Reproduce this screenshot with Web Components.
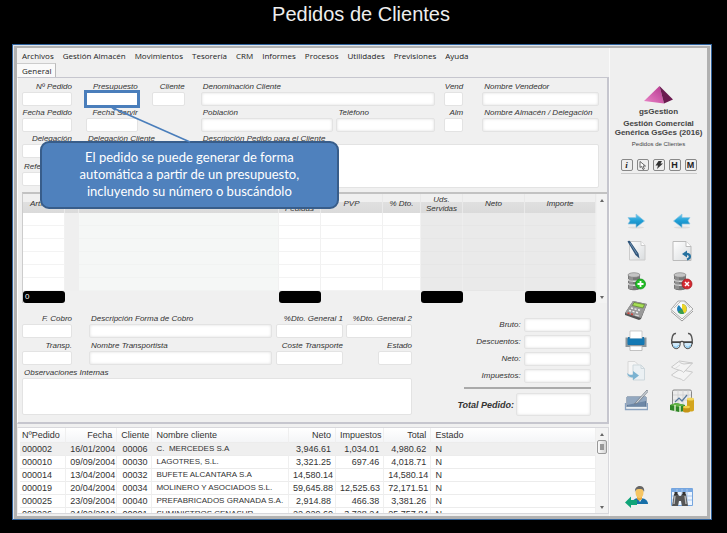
<!DOCTYPE html>
<html lang="es">
<head>
<meta charset="utf-8">
<title>Pedidos de Clientes</title>
<style>
  html { background: #000; }
  body { margin: 0; background: #000; font-family: "Liberation Sans", Arial, sans-serif; color: #333; }
</style>
</head>
<body>
<order-page></order-page>

<script>
const define = (name, html, setup) => {
  const template = document.createElement('template');
  template.innerHTML = html;
  customElements.define(name, class extends HTMLElement {
    constructor() {
      super();
      this.attachShadow({ mode: 'open' }).append(template.content.cloneNode(true));
    }
    connectedCallback() {
      if (setup && !this.ready) { this.ready = true; setup(this, this.shadowRoot); }
    }
  });
};

/* Labelled text box. Attributes: label, align=end, soft, area, inline, total, marked */
define('gs-field', `
<style>
  :host { display: flex; flex-direction: column; position: relative; min-width: 0; font-size: 8px; }
  label { height: 10px; line-height: 10px; font-style: italic; white-space: nowrap; padding-left: 2px; color: #333; }
  :host([align=end]) label { align-self: flex-end; padding: 0; }
  input, textarea { display: block; box-sizing: border-box; width: 100%; height: 14px; margin: 0; padding: 0 3px;
    border: 1px solid #e3e3e3; border-radius: 2px; background: #fff; font: 8px "Liberation Sans", Arial, sans-serif; resize: none; outline: none; }
  textarea { flex: 1; }
  :host([soft]) input { box-shadow: inset 0 0 3px #ddd; }
  :host([marked]) input { outline: 3px solid #4a7ebb; outline-offset: -1px; border-radius: 0; }
  :host([inline]) { flex-direction: row; align-items: center; justify-content: flex-end; gap: 3px; }
  :host([inline]) label { align-self: center; padding: 0; }
  :host([inline]) input { width: 53%; flex: none; }
  :host([total]) { gap: 2px; }
  :host([total]) label { font-weight: bold; font-size: 9px; }
  :host([total]) input { width: 59%; height: 23px; }
</style>
<label for="box"></label><slot></slot>`, (host, root) => {
  root.querySelector('label').textContent = host.getAttribute('label');
  const box = document.createElement(host.hasAttribute('area') ? 'textarea' : 'input');
  box.id = 'box';
  if (box.tagName === 'INPUT') box.type = 'text';
  root.querySelector('label').after(box);
});

define('gs-callout', `
<style>
  :host { position: absolute; z-index: 5; left: -46px; top: 59px; width: 299px; }
  p { margin: 0; padding: 6px 30px 7px; border: 2px solid #385d8a; border-radius: 9px; background: #4f81bd; color: #fff;
    font: 13px/17px Lato, Carlito, sans-serif; text-align: center; }
  svg { position: absolute; left: 70px; top: -35px; }
</style>
<svg width="84" height="38" aria-hidden="true"><path d="M3 2 80 36" stroke="#4a7ebb" stroke-width="1.6"/><path d="M0 1h7l-2 4z" fill="#4a7ebb"/></svg>
<p><slot></slot></p>`);

define('gs-menu', `
<style>
  :host { display: block; }
  nav { display: flex; gap: 9px; padding-left: 5px; height: 15px; align-items: center; }
  button { all: unset; font: 8px/14px "Open Sans", "Noto Sans", sans-serif; color: #222; white-space: nowrap; }
</style>
<nav></nav>`, (host, root) => {
  for (const name of ['Archivos', 'Gestión Almacén', 'Movimientos', 'Tesorería', 'CRM', 'Informes', 'Procesos', 'Utilidades', 'Previsiones', 'Ayuda']) {
    const b = document.createElement('button');
    b.textContent = name;
    root.querySelector('nav').append(b);
  }
});

define('gs-scroll', `
<style>
  :host { display: flex; flex-direction: column; width: 12px; background: #f3f3f3; box-sizing: border-box; }
  button { all: unset; height: 12px; display: grid; place-items: center; }
  i { display: block; border: 2px solid transparent; border-top: 0; border-bottom: 3px solid #666; }
  button:last-child i { transform: rotate(180deg); }
  div { flex: 1; }
  b { display: none; box-sizing: border-box; width: 10px; height: 14px; margin: 0 1px; border: 1px solid #999; border-radius: 2px;
    background: linear-gradient(#999,#999) center/4px 6px no-repeat, linear-gradient(90deg,#fafafa,#d5d5d5); }
  :host([thumb]) b { display: block; }
</style>
<button aria-label="Subir"><i></i></button><div><b></b></div><button aria-label="Bajar"><i></i></button>`);

define('gs-lines', `
<style>
  :host { display: flex; border-left: 1px solid #ccc; border-top: 2px solid #c2c2c2; }
  table { flex: 1; width: 0; table-layout: fixed; border-collapse: separate; border-spacing: 0; font-size: 8px; font-style: italic; }
  th { height: 19px; padding: 0; font-weight: normal; line-height: 9px; color: #333; border-right: 1px solid #e9e9e9; box-sizing: border-box;
    background: linear-gradient(#f0f0f0 40%, #e0e0e0 42%, #dadada); }
  td { height: 13px; padding: 0; box-sizing: border-box; background: #fff; border-right: 1px solid #f1f1f1; border-bottom: 1px solid #f3f3f3; }
  td.blank { background: #efefef; border-color: #efefef; }
  td.text { background: #f5f7f6; border-bottom-color: #f1f3f2; }
  td.calc { background: #eaeaea; border-color: #e6e6e6; border-right-color: #eee; }
  tfoot td { background: none; border: 0; height: 12px; }
  tfoot span { display: block; height: 12px; line-height: 12px; border-radius: 3px; background: #000; color: #fff; padding-left: 2px; font-style: normal; }
  gs-scroll { margin-left: 1px; width: 10px; }
</style>
<table>
  <colgroup></colgroup>
  <thead><tr></tr></thead><tbody></tbody><tfoot><tr></tr></tfoot>
</table>
<gs-scroll></gs-scroll>`, (host, root) => {
  const cols = [
    ['Artículo', 42, '', '0'], ['', 14, 'blank'], ['', 200, 'text'], ['Uds.<br>Pedidas', 42, '', ''], ['PVP', 62, ''],
    ['% Dto.', 38, ''], ['Uds.<br>Servidas', 42, 'calc', ''], ['Neto', 62, 'calc'], ['Importe', 71, 'calc', '']
  ];
  const total = cols.reduce((n, c) => n + c[1], 0);
  root.querySelector('colgroup').innerHTML = cols.map(c => `<col style="width:${c[1] * 100 / total}%">`).join('');
  root.querySelector('thead tr').innerHTML = cols.map(c => `<th>${c[0]}</th>`).join('');
  root.querySelector('tbody').innerHTML = ('<tr>' + cols.map(c => `<td class="${c[2]}"></td>`).join('') + '</tr>').repeat(6);
  root.querySelector('tfoot tr').innerHTML = cols.map(c => `<td>${c[3] === undefined ? '' : `<span>${c[3]}</span>`}</td>`).join('');
});

define('gs-orders', `
<style>
  :host { display: flex; height: 87px; overflow: hidden; background: #fff; border: 1px solid #d8d8dc; border-left-color: #eee; box-sizing: border-box; }
  div { flex: 1; overflow: hidden; padding-left: 2px; }
  table { width: 100%; table-layout: fixed; border-collapse: separate; border-spacing: 0; font-size: 9px; color: #333; }
  th, td { padding: 0 4px; height: 13px; line-height: 12px; box-sizing: border-box; text-align: left; font-weight: normal; white-space: nowrap;
    border-right: 1px solid #efefef; border-bottom: 1px solid #ececec; }
  th { height: 15px; background: linear-gradient(#fff, #f4f5f7); }
  th:first-child, td:first-child { padding-left: 2px; }
  td:nth-child(4) { font-size: 8px; }
  .n { text-align: right; }
  tbody tr:first-child td { background: #efefef; }
</style>
<div><table><colgroup></colgroup><thead><tr></tr></thead><tbody></tbody></table></div>
<gs-scroll thumb></gs-scroll>`, (host, root) => {
  const cols = [['NºPedido', 46], ['Fecha', 51, 1], ['Cliente', 35, 1], ['Nombre cliente', 136], ['Neto', 47, 1], ['Impuestos', 48, 1], ['Total', 47, 1], ['Estado', 164]];
  const rows = [
    ['000002', '16/01/2004', '00006', 'C.&nbsp; MERCEDES S.A', '3,946.61', '1,034.01', '4,980.62', 'N'],
    ['000010', '09/09/2004', '00030', 'LAGOTRES, S.L.', '3,321.25', '697.46', '4,018.71', 'N'],
    ['000014', '13/04/2004', '00032', 'BUFETE ALCANTARA S.A', '14,580.14', '', '14,580.14', 'N'],
    ['000019', '20/04/2004', '00034', 'MOLINERO Y ASOCIADOS S.L.', '59,645.88', '12,525.63', '72,171.51', 'N'],
    ['000025', '23/09/2004', '00040', 'PREFABRICADOS GRANADA S.A.', '2,914.88', '466.38', '3,381.26', 'N'],
    ['000026', '24/02/2010', '00001', 'SUMINISTROS CENASUR', '22,029.60', '3,728.24', '25,757.84', 'N']
  ];
  const total = cols.reduce((n, c) => n + c[1], 0);
  const cls = i => cols[i][2] ? ' class="n"' : '';
  root.querySelector('colgroup').innerHTML = cols.map(c => `<col style="width:${c[1] * 100 / total}%">`).join('');
  root.querySelector('thead tr').innerHTML = cols.map((c, i) => `<th${cls(i)}>${c[0]}</th>`).join('');
  root.querySelector('tbody').innerHTML = rows.map(r => '<tr>' + r.map((v, i) => `<td${cls(i)}>${v}</td>`).join('') + '</tr>').join('');
});

const disks = `<path d="M4 6v13c0 3 12 3 12 0V6z" fill="#777"/><path d="M4 10c0 3 12 3 12 0M4 14c0 3 12 3 12 0" fill="none" stroke="#ddd" stroke-width="1.3"/><path d="M6 6v14M8 7v13" stroke="#aaa"/><ellipse cx="10" cy="6" rx="6" ry="2.3" fill="#c4c4c4" stroke="#777" stroke-width=".6"/>`;
const icons = {
  siguiente: `<ellipse cx="12" cy="18.500" rx="8" ry="1" fill="#ddd"/><path d="M4 8.500h8V5l8.500 7-8.500 6.500V15H4l2-3.200z" fill="url(#blue)" stroke="#8fc6e2" stroke-width=".7"/>`,
  anterior: `<ellipse cx="12" cy="18.500" rx="8" ry="1" fill="#ddd"/><path d="M20 8.500h-8V5l-8.500 7 8.500 6.500V15h8l-2-3.200z" fill="url(#blue)" stroke="#8fc6e2" stroke-width=".7"/>`,
  modificar: `<path d="M5.500 2.500H17l4 4v14.500H5.500z" fill="url(#paper)" stroke="#ccc"/><path d="M17 2.500v4h4" fill="#fff" stroke="#ccc"/><path d="M3.500 2.500c1-1 2.500-1 3.500 1l7.500 11 1 5-4-3.500z" fill="#2f5479"/><path d="M6 4l7 11" stroke="#7d9fbd" stroke-width=".8"/>`,
  deshacer: `<path d="M3 2.500h13l5 5v14H3z" fill="url(#paper)" stroke="#bbb"/><path d="M16 2.500v5h5" fill="#fff" stroke="#bbb"/><path d="M17 20.500c4-1 4-6-1-5.500" fill="none" stroke="#25719f" stroke-width="2.200"/><path d="M12 15l5-3.500v7z" fill="#25719f"/>`,
  alta: disks + `<circle cx="16.500" cy="15" r="5" fill="#22bd26" stroke="#0c8c14" stroke-width=".7"/><path d="M16.500 12v6m-3-3h6" stroke="#fff" stroke-width="1.800"/>`,
  baja: disks + `<circle cx="17" cy="15" r="5" fill="#d52931" stroke="#9e1419" stroke-width=".7"/><path d="M15 13l4 4m0-4l-4 4" stroke="#fff" stroke-width="1.500"/>`,
  calcular: `<path d="M9 2l14 3-6 15-2 1L1 16v-2z" fill="#555"/><path d="M9 2l14 3-6 14L1 14z" fill="#9a9a9a"/><path d="M10 3.500l10.500 2-1.500 3.500L8.500 6.500z" fill="#a7df55" stroke="#517a20" stroke-width=".6"/><path d="M7 9l2 .5m1.500.4l2 .5m1.500.4l2 .5M5 11.500l2 .5m1.500.4l2 .5m1.500.4l2 .5" stroke="#eee" stroke-width="1.400"/><path d="M3.500 14l2 .5m1.500.4l2 .5" stroke="#d43f35" stroke-width="1.500"/><path d="M11 16l4 1" stroke="#ddd" stroke-width="1.200"/>`,
  informes: `<path d="M1 12.500L12 22l11-10" fill="#fff" stroke="#999"/><path d="M1 10.500L12 20l11-10-8-8H8z" fill="#f4f5f5" stroke="#aaa"/><path d="M4 9l7-7M14 2l6 7" stroke="#bbb"/><circle cx="12" cy="10" r="5" fill="#1d7fb8"/><path d="M12 10V5a5 5 0 0 1 2 9.500z" fill="#eed527"/><path d="M12 10l2 4.500a5 5 0 0 1-6-1.500z" fill="#3b9e49"/><path d="M8 5l4 5V4z" fill="#fff"/>`,
  imprimir: `<path d="M1.500 8.500h21v9.500h-21z" fill="#8b959b"/><path d="M4 8h16v8H4z" fill="#176fa5"/><path d="M6 2h12v8H6z" fill="#fff" stroke="#bbb" stroke-width=".7"/><path d="M3.500 9.500h17v6h-17z" fill="#1479b4"/><path d="M6 17h12v4.500H6z" fill="#fff" stroke="#aaa" stroke-width=".7"/>`,
  ver: `<path d="M2 15C1 9 3 4 6 4.500M22 15c1-6-1-11-4-10.500" fill="none" stroke="#555" stroke-width="1.400"/><path d="M2 13h8c1.500 8-7 9-8 2zM22 13h-8c-1.500 8 7 9 8 2z" fill="#cfe9fa" stroke="#444"/><path d="M1.500 13.200h8.500c1-1 3-1 4 0h8.500" fill="none" stroke="#444" stroke-width="1.500"/><path d="M3.500 17c2 2 4 1.500 5-1M15.500 17c2 2 4 1.500 5-1" fill="none" stroke="#68b8e8"/>`,
  copiar: `<g opacity=".65"><path d="M4 2.500h7l3 3V18H4z" fill="#f9f9f9" stroke="#ccc"/><path d="M9 6h8l3.500 3.500V21H9z" fill="#eaf2f6" stroke="#bccbd2"/><path d="M17 6v3.500h3.500" fill="none" stroke="#bccbd2"/><path d="M3 14c2 2 4 2 6 1.500V12l6 4.500L9 21v-2.500c-3 0-5-1-6-4.500z" fill="#3e93c2"/></g>`,
  apilar: `<g fill="#f4f4f4" stroke="#c4c4c4" stroke-width=".9"><path d="M1.500 16l8-5.500 13 2.500-9 9c-2-3-7-2-12-6z"/><path d="M1.500 8l8-6 13 2-9 9.500c-2-3-7-2-12-5.500z"/><path d="M9 2.500c1 1 2 2 5 2.500l8.500-1" fill="none"/><path d="M5 9.500l5-3.500" fill="none" stroke="#ddd"/></g>`,
  firmar: `<path d="M3 8h19v10H3z" fill="#6d87a6" stroke="#536d8b"/><path d="M3 8h19v4L3 16z" fill="#93a8c0"/><path d="M1.500 14v6.500h22V14" fill="none" stroke="#8ba3c0" stroke-width="1.300"/><path d="M3 18.500h19" stroke="#eaf0f5" stroke-width="1.500"/><path d="M23 1L12 13l-1.500 2 3-1L24 2.500z" fill="#cfd4d9" stroke="#68737e" stroke-width=".7"/>`,
  cobros: `<rect x="2.500" y="1" width="19" height="17" rx="1.500" fill="#ececec" stroke="#888"/><path d="M3 6h18M3 11h18M8 1v16M13 1v16M18 1v16" stroke="#ccc" stroke-width=".7"/><path d="M5 13l4-4 3 3 5-6" fill="none" stroke="#56779b" stroke-width="1.200"/><path d="M0 16l6-2 9 2v6l-6 1-9-2z" fill="#2f8627"/><path d="M0 16l6-2 9 2-6 2z" fill="#65b447"/><path d="M5 16v6m5-5v6" stroke="#dcebc9" stroke-width="1.500"/><path d="M17 10v11c0 2 7 2 7 0V10z" fill="#d3a51e"/><path d="M13 18v4c0 2 7 2 7 0v-4z" fill="#c59416"/><ellipse cx="20.500" cy="10" rx="3.500" ry="1.500" fill="#f3d75f"/><ellipse cx="16.500" cy="18" rx="3.500" ry="1.300" fill="#f1d049"/>`,
  salir: `<path d="M8 19c0-5 4-6 8-6s8 2 8 6z" fill="#176fa8"/><path d="M13 12h6l-3 5z" fill="#fff"/><path d="M13 11h5v3l-2.500 2L13 14z" fill="#e9a93e"/><ellipse cx="15.500" cy="7.500" rx="4" ry="5.500" fill="#f6c563"/><path d="M11 7c-1-8 11-8 9 0-1-3-2-3-4.500-3S12 4 11 7z" fill="#666"/><path d="M1 17.500l6-6V15h6v5H7v3z" fill="#10a478"/>`,
  buscar: `<path d="M1.500 3.500h21v17h-21z" fill="#edf5ff" stroke="#75a5de"/><path d="M1.500 4h21v3h-21z" fill="#79a9e3"/><path d="M2 11h20M2 15h20M7 4v16M12 4v16M17 4v16" stroke="#a9c7ed"/><path d="M4 9h4l1 2h2l1-2h4l2 12h-6l-1-5H9l-1 5H2z" fill="#555"/><path d="M5 11l-1 8M15 11l1 8" stroke="#bbb" stroke-width="1.300"/><path d="M4.500 7h3v3h-3zM12.500 7h3v3h-3z" fill="#333"/>`
};
const defs = `<defs><linearGradient id="blue" x2="0" y2="1"><stop stop-color="#6cc9ef"/><stop offset=".5" stop-color="#1f9fd6"/><stop offset="1" stop-color="#1681b8"/></linearGradient><linearGradient id="paper" x2="1" y2="1"><stop stop-color="#fff"/><stop offset="1" stop-color="#d9dcde"/></linearGradient></defs>`;

define('gs-tool', `
<style>
  :host { display: block; }
  button { all: unset; display: block; width: 24px; height: 24px; }
  svg { display: block; }
</style>
<button><svg width="24" height="24" viewBox="0 0 24 24"></svg></button>`, (host, root) => {
  const name = host.getAttribute('name');
  root.querySelector('button').setAttribute('aria-label', name);
  root.querySelector('svg').innerHTML = defs + icons[name];
});

define('gs-side', `
<style>
  :host { display: flex; flex-direction: column; align-items: center; width: 98px; flex: none; background: #efefef; text-align: center; }
  .logo { margin-top: 38px; }
  strong, small { display: block; font-size: 8px; line-height: 9px; white-space: nowrap; color: #444; }
  .name { margin: 3px 0; }
  small { font-size: 6px; margin-top: 3px; }
  .mini { display: flex; gap: 4px; margin-top: 10px; padding-bottom: 2px; border-bottom: 1px solid #ccc; }
  .mini button { all: unset; box-sizing: border-box; width: 12px; height: 12px; border: 1px solid #888; border-radius: 2px; background: #eee;
    display: grid; place-items: center; font: bold 9px/10px "Liberation Sans", Arial, sans-serif; color: #222; }
  .mini .i { font-family: "Liberation Serif", serif; font-style: italic; }
  .tools { display: grid; grid-template-columns: 24px 24px; gap: 6px 22px; margin-top: 35px; }
  .foot { margin-top: auto; margin-bottom: 7px; }
</style>
<svg class="logo" width="30" height="18" viewBox="0 0 30 18" aria-hidden="true">
  <defs><linearGradient id="p" x1="1" x2="0" y2="1"><stop stop-color="#b5358e"/><stop offset="1" stop-color="#ea86c8"/></linearGradient></defs>
  <path d="M15.500 0L0 15l20 2.500z" fill="url(#p)"/><path d="M15.500 0L20 17.500l9-4z" fill="#6b1a50"/>
</svg>
<strong class="name">gsGestion</strong>
<strong>Gestión Comercial</strong><strong>Genérica GsGes (2016)</strong>
<small>Pedidos de Clientes</small>
<div class="mini">
  <button class="i">i</button>
  <button aria-label="Seleccionar"><svg width="8" height="9" viewBox="0 0 8 9"><path d="M1 .5v6l1.500-1.200L4 8.500l1.300-.6L4 5h2.500z" fill="#fff" stroke="#444" stroke-width=".8"/></svg></button>
  <button aria-label="Rápido"><svg width="8" height="8" viewBox="0 0 8 8"><path d="M3.500 0H7L5.500 2.500H8L2 8l1-3.500H.5z" fill="#333"/></svg></button>
  <button>H</button><button>M</button>
</div>
<div class="tools">
  <gs-tool name="siguiente"></gs-tool><gs-tool name="anterior"></gs-tool>
  <gs-tool name="modificar"></gs-tool><gs-tool name="deshacer"></gs-tool>
  <gs-tool name="alta"></gs-tool><gs-tool name="baja"></gs-tool>
  <gs-tool name="calcular"></gs-tool><gs-tool name="informes"></gs-tool>
  <gs-tool name="imprimir"></gs-tool><gs-tool name="ver"></gs-tool>
  <gs-tool name="copiar"></gs-tool><gs-tool name="apilar"></gs-tool>
  <gs-tool name="firmar"></gs-tool><gs-tool name="cobros"></gs-tool>
</div>
<div class="tools foot"><gs-tool name="salir"></gs-tool><gs-tool name="buscar"></gs-tool></div>`);

define('gs-form', `
<style>
  :host { display: block; padding: 4px 0 6px 4px; border: 1px solid #c6c6ce; border-left-color: #fff; border-width: 1px 2px 2px 1px; background: #f0f0f0; }
  .head { display: grid; margin-right: 8px; grid-template-rows: 24px 24px 24px 28px; row-gap: 2px;
    grid-template-columns: minmax(0,50fr) minmax(0,14fr) minmax(0,52fr) minmax(0,14fr) minmax(0,33fr) minmax(0,16fr) minmax(0,133fr) minmax(0,3fr) minmax(0,99fr) minmax(0,9fr) minmax(0,19fr) minmax(0,19fr) minmax(0,117fr); }
  .c1 { grid-column: 1; } .c2 { grid-column: 3; } .c3 { grid-column: 5; } .c4 { grid-column: 7; } .c45 { grid-column: 7 / 10; }
  .c5 { grid-column: 9; } .c6 { grid-column: 11; } .c7 { grid-column: 13; } .c47 { grid-column: 7 / 14; }
  .r1 { grid-row: 1; } .r2 { grid-row: 2; } .r3 { grid-row: 3; } .r4 { grid-row: 4; align-self: center; } .r34 { grid-row: 3 / 5; }
  gs-lines { margin-top: 4px; }
  .base { display: grid; grid-template-columns: minmax(0,390fr) minmax(0,52fr) minmax(0,127fr); margin: 11px 16px 0 0; }
  .pay { display: grid; grid-template-rows: 24px 24px 47px; row-gap: 3px;
    grid-template-columns: minmax(0,50fr) minmax(0,17fr) minmax(0,183fr) minmax(0,4fr) minmax(0,67fr) minmax(0,3fr) minmax(0,32fr) minmax(0,34fr); }
  .p1 { grid-column: 1; } .p2 { grid-column: 3; } .p3 { grid-column: 5; } .p4 { grid-column: 7 / 9; } .p5 { grid-column: 8; } .pa { grid-column: 1 / 9; grid-row: 3; }
  .sum { grid-column: 3; display: flex; flex-direction: column; gap: 3px; padding-top: 4px; }
  hr { width: 100%; height: 2px; margin: 1px 0; border: 0; background: #aaa; }
</style>
<div class="head">
  <gs-field class="c1 r1" align="end" label="Nº Pedido"></gs-field>
  <gs-field class="c2 r1" align="end" label="Presupuesto" marked><gs-callout>El pedido se puede generar de forma automática a partir de un presupuesto, incluyendo su número o buscándolo</gs-callout></gs-field>
  <gs-field class="c3 r1" align="end" label="Cliente"></gs-field>
  <gs-field class="c45 r1" soft label="Denominación Cliente"></gs-field>
  <gs-field class="c6 r1" align="end" label="Vend"></gs-field>
  <gs-field class="c7 r1" soft label="Nombre Vendedor"></gs-field>
  <gs-field class="c1 r2" align="end" label="Fecha Pedido"></gs-field>
  <gs-field class="c2 r2" align="end" label="Fecha Servir"></gs-field>
  <gs-field class="c4 r2" soft label="Población"></gs-field>
  <gs-field class="c5 r2" soft label="Teléfono"></gs-field>
  <gs-field class="c6 r2" align="end" label="Alm"></gs-field>
  <gs-field class="c7 r2" soft label="Nombre Almacén / Delegación"></gs-field>
  <gs-field class="c1 r3" align="end" label="Delegación"></gs-field>
  <gs-field class="c2 r3" label="Delegación Cliente"></gs-field>
  <gs-field class="c47 r34" area label="Descripción Pedido para el Cliente"></gs-field>
  <gs-field class="c1 r4" label="Referencia"></gs-field>
</div>
<gs-lines></gs-lines>
<div class="base">
  <div class="pay">
    <gs-field class="p1" align="end" label="F. Cobro"></gs-field>
    <gs-field class="p2" soft label="Descripción Forma de Cobro"></gs-field>
    <gs-field class="p3" align="end" label="%Dto. General 1"></gs-field>
    <gs-field class="p4" align="end" label="%Dto. General 2"></gs-field>
    <gs-field class="p1" align="end" label="Transp."></gs-field>
    <gs-field class="p2" soft label="Nombre Transportista"></gs-field>
    <gs-field class="p3" align="end" label="Coste Transporte"></gs-field>
    <gs-field class="p5" align="end" label="Estado"></gs-field>
    <gs-field class="pa" area label="Observaciones Internas"></gs-field>
  </div>
  <div class="sum">
    <gs-field inline soft label="Bruto:"></gs-field>
    <gs-field inline soft label="Descuentos:"></gs-field>
    <gs-field inline soft label="Neto:"></gs-field>
    <gs-field inline soft label="Impuestos:"></gs-field>
    <hr>
    <gs-field inline soft total label="Total Pedido:"></gs-field>
  </div>
</div>`);

define('order-page', `
<style>
  :host { display: flex; flex-direction: column; }
  h1 { margin: 0; padding: 0 5px 16px 0; font-size: 20px; line-height: 28px; font-weight: normal; color: #eee; text-align: center; }
  .window { margin: 0 15px 12px 12px; border: 1px solid #2f629c; padding: 1px 1px 0; background: #dfe5ec; }
  .frame { display: flex; border: 3px solid #b1b1b1; border-top-width: 2px; background: #f0f0f0; }
  .main { flex: 1; min-width: 0; display: flex; flex-direction: column; padding-bottom: 2px; }
  .tab { all: unset; align-self: flex-start; box-sizing: border-box; height: 14px; padding: 0 4px 0 5px; border-right: 1px solid #bbb; border-top: 1px solid #ccc;
    background: #fafafa; font: 8px/13px "Open Sans", "Noto Sans", sans-serif; color: #222; }
  gs-orders { margin-top: 3px; }
  gs-side { border-left: 1px solid #fafafa; box-sizing: border-box; }
</style>
<h1>Pedidos de Clientes</h1>
<div class="window"><div class="frame">
  <div class="main">
    <gs-menu></gs-menu>
    <button class="tab" role="tab" aria-selected="true">General</button>
    <gs-form></gs-form>
    <gs-orders></gs-orders>
  </div>
  <gs-side></gs-side>
</div></div>`);
</script>
</body>
</html>
